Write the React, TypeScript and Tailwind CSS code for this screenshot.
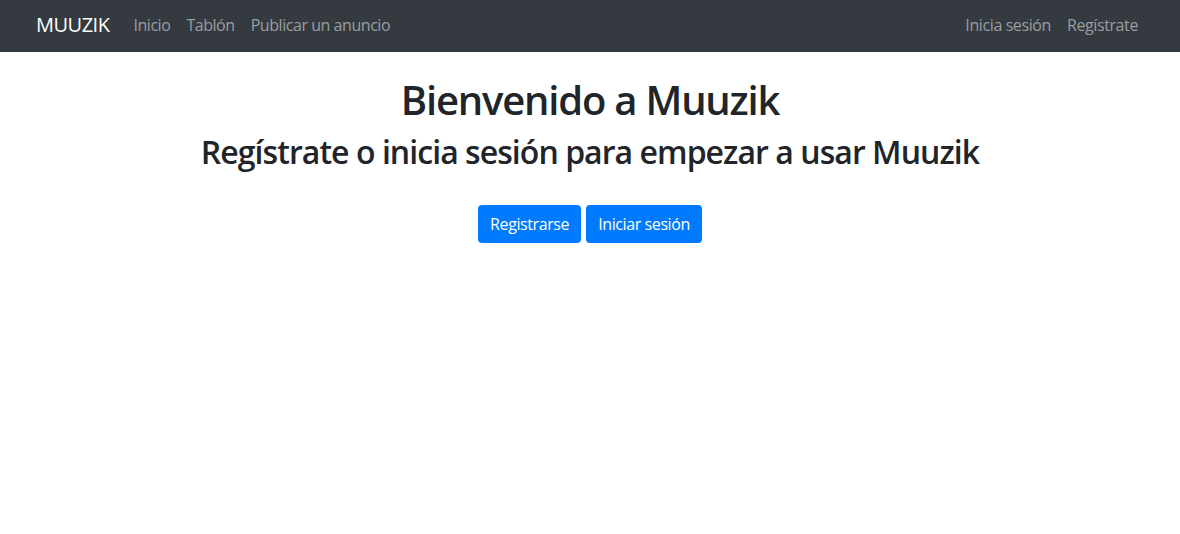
export default function App() {
  return (
    <div className="min-h-[534px] bg-white font-['Open_Sans',sans-serif] text-[#212529]">
      <nav className="flex h-[52px] items-center bg-[#343a40] pb-[3px] pl-[36px] pr-[34px]">
        <a className="mr-[16px] text-[20px] leading-[30px] tracking-[-0.5px] text-white">MUUZIK</a>
        <ul className="flex flex-1 items-center">
          <li><a className="block px-2 text-[16px] tracking-[-0.45px] text-[#9a9da0]">Inicio</a></li>
          <li><a className="block px-2 text-[16px] tracking-[-0.45px] text-[#9a9da0]">Tablón</a></li>
          <li><a className="block px-2 text-[16px] tracking-[-0.45px] text-[#9a9da0]">Publicar un anuncio</a></li>
        </ul>
        <ul className="flex items-center">
          <li><a className="block px-2 text-[16px] tracking-[-0.4px] text-[#9a9da0]">Inicia sesión</a></li>
          <li><a className="block px-2 text-[16px] tracking-[-0.4px] text-[#9a9da0]">Regístrate</a></li>
        </ul>
      </nav>

      <main className="pt-[24px] text-center">
        <h1 className="text-[40px] font-semibold leading-[1.2] tracking-[-1.2px]">Bienvenido a Muuzik</h1>
        <h2 className="mt-[9px] text-[32px] font-semibold leading-[1.2] tracking-[-0.95px]">
          Regístrate o inicia sesión para empezar a usar Muuzik
        </h2>
        <div className="mt-[34px] flex justify-center gap-[5px]">
          <button className="h-[38px] rounded bg-[#007bff] px-3 text-[16px] tracking-[-0.4px] text-white">Registrarse</button>
          <button className="h-[38px] rounded bg-[#007bff] px-3 text-[16px] tracking-[-0.4px] text-white">Iniciar sesión</button>
        </div>
      </main>
    </div>
  );
}
